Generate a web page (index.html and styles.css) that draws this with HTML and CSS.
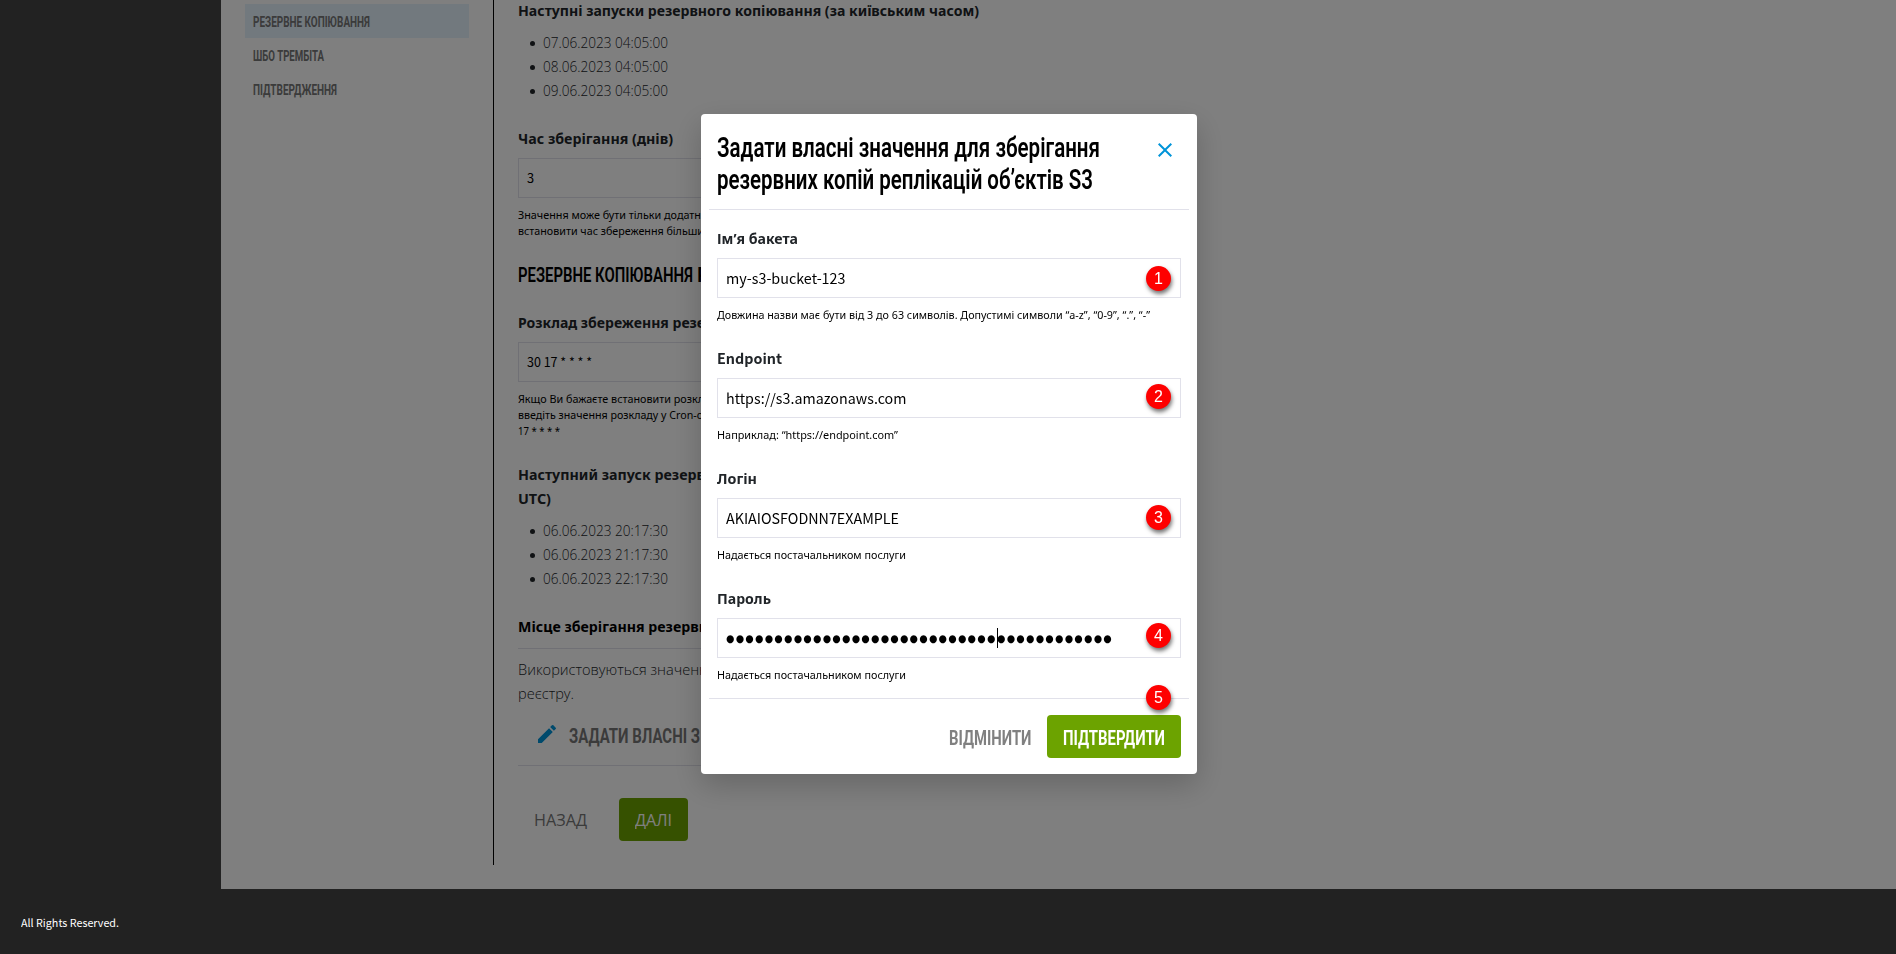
FILE: index.html
```html
<!DOCTYPE html>
<html lang="uk">
<head>
<meta charset="utf-8">
<title>Резервне копіювання</title>
<link rel="stylesheet" href="styles.css">
</head>
<body>
<div class="page">
  <div class="shell">
    <nav class="side">
      <a class="item active"><span class="fit" data-w="117">РЕЗЕРВНЕ КОПІЮВАННЯ</span></a>
      <a class="item"><span class="fit" data-w="71">ШБО ТРЕМБІТА</span></a>
      <a class="item"><span class="fit" data-w="84">ПІДТВЕРДЖЕННЯ</span></a>
    </nav>
    <main class="content">
      <h3 class="label"><span class="fit" data-w="461">Наступні запуски резервного копіювання (за київським часом)</span></h3>
      <ul class="dates">
        <li><span class="fit" data-w="125">07.06.2023 04:05:00</span></li>
        <li><span class="fit" data-w="125">08.06.2023 04:05:00</span></li>
        <li><span class="fit" data-w="125">09.06.2023 04:05:00</span></li>
      </ul>
      <h3 class="label gap24"><span class="fit" data-w="155">Час зберігання (днів)</span></h3>
      <div class="input small"><span>3</span></div>
      <div class="hint">
        <div><span class="fit" data-w="183">Значення може бути тільки додатн</span></div>
        <div><span class="fit" data-w="186">встановити час збереження більши</span></div>
      </div>
      <h2 class="section"><span class="fit" data-w="175">РЕЗЕРВНЕ КОПІЮВАННЯ</span><span class="rest">Р</span></h2>
      <h3 class="label"><span class="fit" data-w="187">Розклад збереження резе</span></h3>
      <div class="input small"><span class="fit" data-w="65">30 17 * * * *</span></div>
      <div class="hint">
        <div><span class="fit" data-w="186">Якщо Ви бажаєте встановити розкл</span></div>
        <div><span class="fit" data-w="185">введіть значення розкладу у Cron-о</span></div>
        <div><span class="fit" data-w="42">17 * * * *</span></div>
      </div>
      <h3 class="label gap24"><span class="fit" data-w="187">Наступний запуск резерв</span><br><span class="fit" data-w="33">UTC)</span></h3>
      <ul class="dates">
        <li><span class="fit" data-w="125">06.06.2023 20:17:30</span></li>
        <li><span class="fit" data-w="125">06.06.2023 21:17:30</span></li>
        <li><span class="fit" data-w="125">06.06.2023 22:17:30</span></li>
      </ul>
      <h3 class="label gap24 black"><span class="fit" data-w="190">Місце зберігання резервн</span></h3>
      <div class="storage">
        <p class="light"><span class="fit" data-w="190">Використовуються значенн</span><br><span class="fit" data-w="56">реєстру.</span></p>
        <div class="edit">
          <svg width="24" height="24" viewBox="0 0 24 24"><path fill="#0094d9" d="M3 17.25V21h3.75L17.81 9.94l-3.75-3.75L3 17.25zM20.71 7.04a1 1 0 0 0 0-1.41l-2.34-2.34a1 1 0 0 0-1.41 0l-1.83 1.83 3.75 3.75 1.83-1.83z"/></svg>
          <span class="fit" data-w="131">ЗАДАТИ ВЛАСНІ З</span>
        </div>
      </div>
      <div class="actions">
        <span class="back"><span class="fit" data-w="53">НАЗАД</span></span>
        <span class="next"><span class="fit" data-w="37">ДАЛІ</span></span>
      </div>
    </main>
  </div>
  <div class="overlay"></div>
  <footer class="footer"><span class="fit" data-w="98">All Rights Reserved.</span></footer>
</div>

<div class="modal">
  <header class="modal-head">
    <h1><span class="fit" data-w="383">Задати власні значення для зберігання</span><br><span class="fit" data-w="376">резервних копій реплікацій об’єктів S3</span></h1>
    <svg width="24" height="24" viewBox="0 0 24 24"><path fill="#0094d9" d="M19 6.41 17.59 5 12 10.59 6.41 5 5 6.41 10.59 12 5 17.59 6.41 19 12 13.41 17.59 19 19 17.59 13.41 12z"/></svg>
  </header>
  <div class="fields">
    <div class="field">
      <div class="label"><span class="fit" data-w="81">Ім’я бакета</span></div>
      <div class="input"><span class="fit" data-w="119.5">my-s3-bucket-123</span></div>
      <div class="hint"><span class="fit" data-w="433">Довжина назви має бути від 3 до 63 символів. Допустимі символи “a-z”, “0-9”, “.”, “-”</span></div>
      <b class="pin p1">1</b>
    </div>
    <div class="field">
      <div class="label latin"><span class="fit" data-w="65">Endpoint</span></div>
      <div class="input"><span class="fit" data-w="180.5">https://s3.amazonaws.com</span></div>
      <div class="hint"><span class="fit" data-w="181">Наприклад: “https://endpoint.com”</span></div>
      <b class="pin p2">2</b>
    </div>
    <div class="field">
      <div class="label"><span class="fit" data-w="40">Логін</span></div>
      <div class="input"><span class="fit" data-w="173">AKIAIOSFODNN7EXAMPLE</span></div>
      <div class="hint"><span class="fit" data-w="189">Надається постачальником послуги</span></div>
      <b class="pin p3">3</b>
    </div>
    <div class="field">
      <div class="label"><span class="fit" data-w="54">Пароль</span></div>
      <div class="input dots"><span class="fit" data-w="270.6">●●●●●●●●●●●●●●●●●●●●●●●●●●●●</span><i class="caret"></i><span class="fit" data-w="116">●●●●●●●●●●●●</span></div>
      <div class="hint"><span class="fit" data-w="189">Надається постачальником послуги</span></div>
      <b class="pin p4">4</b>
    </div>
  </div>
  <footer class="modal-foot">
    <span class="cancel"><span class="fit" data-w="82.5">ВІДМІНИТИ</span></span>
    <span class="confirm"><span class="fit" data-w="102">ПІДТВЕРДИТИ</span></span>
    <b class="pin p5">5</b>
  </footer>
</div>
<script src="fit.js"></script>
</body>
</html>
```
FILE: styles.css
```css
* { box-sizing: border-box; }
body { margin: 0; font-family: "Noto Sans", "Open Sans", sans-serif; color: #212529; background: #444; overflow: hidden; }
h1, h2, h3, p, ul { margin: 0; padding: 0; font-weight: inherit; }
.fit { display: inline-block; white-space: nowrap; transform-origin: 0 50%; }

.page { height: 954px; overflow: hidden; background: #444; }
.shell { display: flex; height: 889px; margin-left: 221px; background: #fff; }
.side { width: 272px; padding: 4px 24px 0; }
.item { display: block; height: 34px; padding-left: 8px; font: 700 14px/36px Roboto, sans-serif; color: #767676; }
.item.active { background: #e4f3fd; }
.content { width: 560px; height: 865px; padding: 0 0 0 24px; border-left: 1px solid #000; }
.content > :first-child { margin-top: -2px; }

.label { font-size: 14.7px; font-weight: 700; line-height: 24px; color: #212529; white-space: nowrap; }
.latin { font-family: "Noto Sans CJK SC", sans-serif; font-size: 14.4px; }
.gap24 { margin-top: 24px; }
.black { color: #000; }
.dates { margin-top: 8px; list-style: none; font-family: "Open Sans", sans-serif; font-weight: 300; font-size: 14.7px; line-height: 24px; }
.dates li { display: flex; align-items: center; height: 24px; padding-left: 12px; }
.dates li::before { content: ""; width: 5px; height: 5px; margin: 2px 8px 0 0; border-radius: 50%; background: #212529; }
.input { display: flex; align-items: center; height: 40px; margin-top: 8px; padding-left: 8px; border: 1px solid #e1e1ea; color: #000; font-family: "Noto Sans CJK SC", sans-serif; font-size: 14.4px; line-height: 24px; }
.input.small { font-size: 12.8px; }
.hint { margin-top: 8px; padding-top: 1px; margin-bottom: -1px; font-size: 11.1px; line-height: 16px; color: #000; white-space: nowrap; }
.section { margin-top: 21px; height: 51px; font: 600 20.4px/32px Roboto, sans-serif; color: #000; white-space: nowrap; }
.rest { margin-left: 4px; }
.storage { margin-top: 10px; height: 118px; padding-top: 8px; border: solid #e1e1ea; border-width: 1px 0; }
.light { font-family: "Open Sans", sans-serif; font-weight: 300; font-size: 14.7px; line-height: 24px; white-space: nowrap; }
.edit { display: flex; align-items: center; gap: 10px; margin: 15px 0 0 17px; height: 32px; font: 700 20.4px/32px Roboto, sans-serif; color: #767676; }
.edit svg { margin-top: -4px; }
.actions { display: flex; margin-top: 32px; font-family: "Open Sans", sans-serif; font-size: 17px; line-height: 43px; }
.back { width: 101px; padding-left: 16px; color: #767676; }
.next { width: 69px; height: 43px; padding-left: 16px; border-radius: 4px; background: #6ca300; color: #fff; }

.overlay { position: fixed; inset: 0; background: rgba(0, 0, 0, .5); }
.footer { position: relative; height: 65px; padding-left: 21px; background: #222; color: #fff; font-family: "Noto Sans CJK SC", sans-serif; font-size: 10.8px; line-height: 67px; }

.modal { position: fixed; left: 701px; top: 114px; width: 496px; height: 660px; padding: 0 8px; border-radius: 4px; background: #fff; box-shadow: 0 11px 30px rgba(0, 0, 0, .2); }
.modal-head { display: flex; justify-content: space-between; height: 96px; padding: 18px 12px 0 8px; border-bottom: 1px solid #e1e1ea; }
.modal-head h1 { font: 600 26.8px/32px Roboto, sans-serif; color: #000; }
.modal-head svg { margin-top: 6px; }
.fields { height: 488px; padding: 16px 8px 0; }
.field { position: relative; height: 120px; }
.dots { font-family: "DejaVu Sans", sans-serif; font-size: 10.6px; letter-spacing: 1.5px; }
.caret { width: 1px; height: 20px; margin-right: -1px; background: #000; }
.modal-foot { position: relative; display: flex; justify-content: flex-end; gap: 16px; padding: 16px 8px 0; border-top: 1px solid #e1e1ea; font: 700 20.4px/46px Roboto, sans-serif; }
.cancel { color: #808080; }
.confirm { width: 134px; height: 43px; padding-left: 16px; border-radius: 4px; background: #6ca300; color: #fff; }
.pin { position: absolute; left: 429px; width: 25px; height: 25px; border-radius: 50%; background: #fe0000; color: #fff; text-align: center; font: 400 16px/25px "Liberation Sans", sans-serif; box-shadow: 1px 3px 4px rgba(0, 0, 0, .55); }
.p1 { top: 40px; }
.p2 { top: 38px; }
.p3 { top: 39px; }
.p4 { top: 37px; }
.p5 { left: 437px; top: -14px; }
```
FILE: fit.js
```js
// Scales each label horizontally to its nominal width.
document.querySelectorAll('.fit').forEach(function (el) {
  var w = parseFloat(el.dataset.w);
  var natural = el.getBoundingClientRect().width;
  el.style.width = w + 'px';
  el.style.transform = 'scaleX(' + (w / natural) + ')';
});
```
